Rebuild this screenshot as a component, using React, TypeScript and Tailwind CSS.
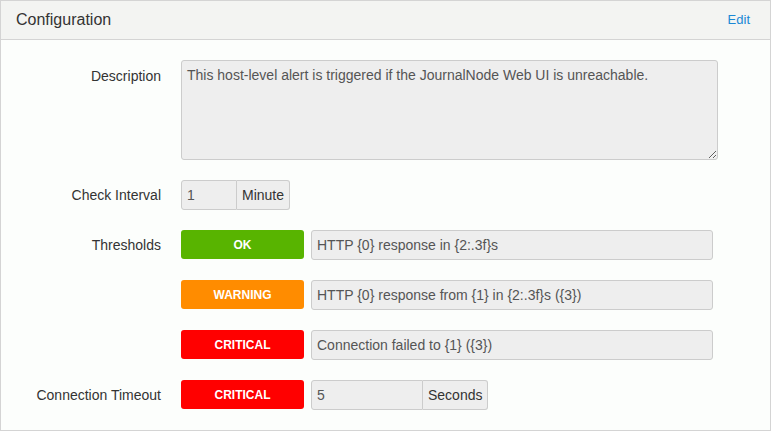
import React from 'react';

const font = { fontFamily: '"Liberation Sans", Arial, sans-serif' };

type Level = 'OK' | 'WARNING' | 'CRITICAL';

const badgeColor: Record<Level, string> = {
  OK: 'bg-[#58b400]',
  WARNING: 'bg-[#ff8c00]',
  CRITICAL: 'bg-[#ff0000]',
};

function Badge({ level }: { level: Level }) {
  return (
    <div
      className={`flex h-[29px] w-[123px] shrink-0 items-center justify-center rounded-[3px] text-[12px] font-bold text-white ${badgeColor[level]}`}
    >
      {level}
    </div>
  );
}

function Field({ value, className = '' }: { value: string; className?: string }) {
  return (
    <div
      className={`flex h-[30px] items-center rounded-[3px] border border-[#cccccc] bg-[#eeeeee] px-[5px] text-[14px] text-[#555555] ${className}`}
    >
      {value}
    </div>
  );
}

function WithUnit({ value, unit, width }: { value: string; unit: string; width: string }) {
  return (
    <div className="flex h-[30px]">
      <div
        className={`flex items-center rounded-l-[3px] border border-[#cccccc] bg-[#eeeeee] px-[5px] text-[14px] text-[#555555] ${width}`}
      >
        {value}
      </div>
      <div className="flex items-center rounded-r-[3px] border border-l-0 border-[#cccccc] bg-[#eeeeee] px-[5px] text-[14px] text-[#333333]">
        {unit}
      </div>
    </div>
  );
}

function Row({ label, children, top }: { label?: string; children: React.ReactNode; top?: boolean }) {
  return (
    <div className={`flex gap-[20px] ${top ? 'items-start' : 'items-center'}`}>
      <div className={`w-[160px] shrink-0 text-right text-[14px] text-[#333333] ${top ? 'pt-[6px]' : ''}`}>
        {label}
      </div>
      {children}
    </div>
  );
}

export default function App() {
  return (
    <div className="h-[432px] w-[772px] bg-white" style={font}>
      <div className="h-[431px] w-[771px] border border-[#d4d4d4] bg-[#fcfefc]">
        {/* Header */}
        <div className="flex h-[39px] items-center justify-between border-b border-[#d4d4d4] bg-[#f3f4f2] pl-[15px] pr-[20px]">
          <span className="text-[16px] text-[#333333]">Configuration</span>
          <span className="text-[13px] text-[#1a88d5]">Edit</span>
        </div>

        {/* Body */}
        <div className="flex flex-col gap-5 pt-5">
          <Row label="Description" top>
            <textarea
              readOnly
              value="This host-level alert is triggered if the JournalNode Web UI is unreachable."
              className="h-[100px] w-[537px] rounded-[3px] border border-[#cccccc] bg-[#eeeeee] px-[5px] py-[4px] text-[14px] text-[#555555] outline-none"
              style={font}
            />
          </Row>

          <Row label="Check Interval">
            <WithUnit value="1" unit="Minute" width="w-[56px]" />
          </Row>

          <Row label="Thresholds">
            <div className="flex gap-[7px]">
              <Badge level="OK" />
              <Field value="HTTP {0} response in {2:.3f}s" className="w-[402px]" />
            </div>
          </Row>

          <Row>
            <div className="flex gap-[7px]">
              <Badge level="WARNING" />
              <Field value="HTTP {0} response from {1} in {2:.3f}s ({3})" className="w-[402px]" />
            </div>
          </Row>

          <Row>
            <div className="flex gap-[7px]">
              <Badge level="CRITICAL" />
              <Field value="Connection failed to {1} ({3})" className="w-[402px]" />
            </div>
          </Row>

          <Row label="Connection Timeout">
            <div className="flex gap-[7px]">
              <Badge level="CRITICAL" />
              <WithUnit value="5" unit="Seconds" width="w-[112px]" />
            </div>
          </Row>
        </div>
      </div>
    </div>
  );
}
